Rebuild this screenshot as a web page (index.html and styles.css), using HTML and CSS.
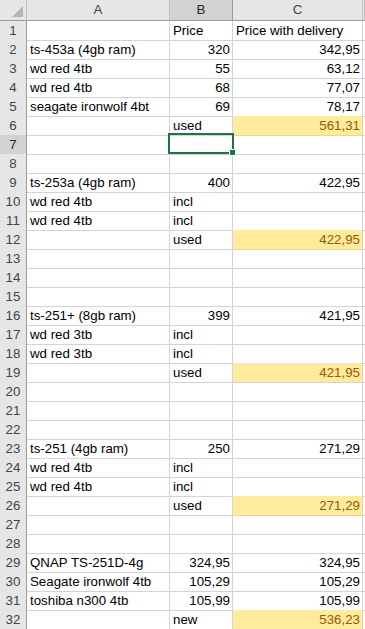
FILE: index.html
```html
<!DOCTYPE html>
<html lang="en">
<head>
    <meta charset="UTF-8">
    <meta name="viewport" content="width=device-width, initial-scale=1.0">
    <title>NAS prices</title>
    <link rel="stylesheet" href="styles.css">
</head>
<body>
    <div class="sheet" id="sheet">
        <div class="row head-row">
            <div class="corner"><span class="corner-tri"></span></div>
            <div class="col-head">A</div>
            <div class="col-head selected">B</div>
            <div class="col-head">C</div>
            <div class="col-head"></div>
        </div>
    </div>

    <script>
        // [A, B, C, highlight]
        const rows = [
            ['', 'Price', 'Price with delivery'],
            ['ts-453a (4gb ram)', '320', '342,95'],
            ['wd red 4tb', '55', '63,12'],
            ['wd red 4tb', '68', '77,07'],
            ['seagate ironwolf 4bt', '69', '78,17'],
            ['', 'used', '561,31', true],
            ['', '', ''],
            ['', '', ''],
            ['ts-253a (4gb ram)', '400', '422,95'],
            ['wd red 4tb', 'incl', ''],
            ['wd red 4tb', 'incl', ''],
            ['', 'used', '422,95', true],
            ['', '', ''],
            ['', '', ''],
            ['', '', ''],
            ['ts-251+ (8gb ram)', '399', '421,95'],
            ['wd red 3tb', 'incl', ''],
            ['wd red 3tb', 'incl', ''],
            ['', 'used', '421,95', true],
            ['', '', ''],
            ['', '', ''],
            ['', '', ''],
            ['ts-251 (4gb ram)', '250', '271,29'],
            ['wd red 4tb', 'incl', ''],
            ['wd red 4tb', 'incl', ''],
            ['', 'used', '271,29', true],
            ['', '', ''],
            ['', '', ''],
            ['QNAP TS-251D-4g', '324,95', '324,95'],
            ['Seagate ironwolf 4tb', '105,29', '105,29'],
            ['toshiba n300 4tb', '105,99', '105,99'],
            ['', 'new', '536,23', true]
        ];

        function isNumber(text) {
            return /^[0-9]+(,[0-9]+)?$/.test(text);
        }

        function makeCell(text, extra) {
            const cell = document.createElement('div');
            cell.className = 'cell' + (extra ? ' ' + extra : '');
            if (isNumber(text)) cell.classList.add('num');
            cell.textContent = text;
            return cell;
        }

        const sheet = document.getElementById('sheet');
        rows.forEach(function(r, i) {
            const row = document.createElement('div');
            row.className = 'row';

            const label = document.createElement('div');
            label.className = 'row-head' + (i === 6 ? ' selected' : '');
            label.textContent = i + 1;
            row.appendChild(label);

            row.appendChild(makeCell(r[0]));
            const b = makeCell(r[1]);
            if (i === 6) {
                b.classList.add('active');
                const sel = document.createElement('div');
                sel.className = 'selection';
                sel.innerHTML = '<span class="handle"></span>';
                b.appendChild(sel);
            }
            row.appendChild(b);
            row.appendChild(makeCell(r[2], r[3] ? 'neutral' : ''));
            row.appendChild(makeCell(''));
            sheet.appendChild(row);
        });
    </script>
</body>
</html>
```

FILE: styles.css
```css
body {
    margin: 0;
    background: #fff;
    font-family: "Liberation Sans", Arial, sans-serif;
    font-size: 13.3px;
    color: #000;
    overflow: hidden;
}
.sheet {
    width: 365px;
}
.row {
    display: grid;
    grid-template-columns: 27px 143px 63px 130px 1fr;
    height: 19px;
}
.head-row {
    height: 21px;
    background: #e6e6e6;
}
.corner,
.col-head {
    position: relative;
    box-sizing: border-box;
    border-right: 1px solid #bfbfbf;
    border-bottom: 1px solid #9b9b9b;
    text-align: center;
    color: #444;
    line-height: 20px;
}
.col-head.selected {
    background: #d2d2d2;
    color: #262626;
    border-right-color: #9b9b9b;
    border-bottom-color: #9b9b9b;
}
.corner-tri {
    position: absolute;
    right: 3px;
    bottom: 3px;
    width: 0;
    height: 0;
    border-left: 11px solid transparent;
    border-bottom: 11px solid #b4b4b4;
}
.row-head {
    box-sizing: border-box;
    background: #e6e6e6;
    border-right: 1px solid #9b9b9b;
    border-bottom: 1px solid #bfbfbf;
    text-align: center;
    color: #444;
    line-height: 19px;
}
.row-head.selected {
    background: #d2d2d2;
    color: #262626;
}
.cell {
    position: relative;
    box-sizing: border-box;
    border-right: 1px solid #d4d4d4;
    border-bottom: 1px solid #d4d4d4;
    padding: 0 3px;
    line-height: 19px;
    white-space: nowrap;
}
.cell.num {
    text-align: right;
    padding-right: 2px;
}
.cell.neutral {
    background: #ffeb9c;
    color: #9c5700;
    text-align: right;
    padding-right: 2px;
}
.selection {
    position: absolute;
    left: -2px;
    top: -2px;
    width: 66px;
    height: 21px;
    box-sizing: border-box;
    border: 2px solid #217346;
    z-index: 2;
}
.handle {
    position: absolute;
    right: -4px;
    bottom: -4px;
    width: 5px;
    height: 5px;
    background: #217346;
    border: 1px solid #fff;
}
```
